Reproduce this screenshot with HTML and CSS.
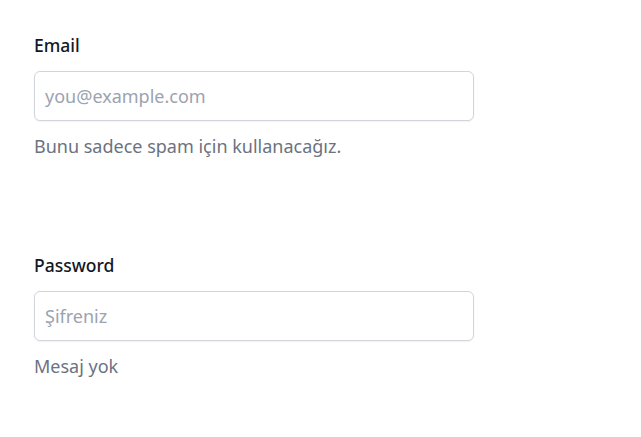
FILE: index.html
```html
<!DOCTYPE html>
<html lang="tr">
<head>
<meta charset="utf-8">
<link rel="stylesheet" href="styles.css">
</head>
<body>
<form class="form">
  <div class="field">
    <label class="label" for="email">Email</label>
    <input class="input" id="email" type="email" placeholder="you@example.com">
    <p class="help">Bunu sadece spam için kullanacağız.</p>
  </div>
  <div class="field">
    <label class="label" for="password">Password</label>
    <input class="input" id="password" type="password" placeholder="Şifreniz">
    <p class="help">Mesaj yok</p>
  </div>
</form>
</body>
</html>
```
FILE: styles.css
```css
html, body {
  margin: 0;
  background: #ffffff;
}
body {
  font-family: "Noto Sans", "Open Sans", sans-serif;
  padding: 33px 34px;
}
.form {
  display: flex;
  flex-direction: column;
  gap: 95px;
  width: 440px;
}
.field {
  display: flex;
  flex-direction: column;
}
.label {
  font-size: 17.5px;
  line-height: 24px;
  font-weight: 500;
  color: #111827;
  margin-bottom: 14px;
}
.input {
  box-sizing: border-box;
  height: 50px;
  width: 100%;
  border: 1px solid #d1d5db;
  border-radius: 6px;
  padding: 0 10px;
  font-family: inherit;
  font-size: 18px;
  color: #111827;
  background: #fff;
  box-shadow: 0 1px 2px rgba(0, 0, 0, 0.05);
  outline: none;
}
.input::placeholder {
  color: #9ca3af;
}
.help {
  margin: 13px 0 0;
  font-size: 18px;
  line-height: 24px;
  color: #6b7280;
}
```
